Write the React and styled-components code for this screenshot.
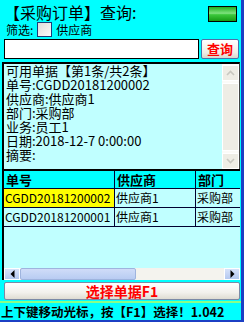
import styled, { createGlobalStyle } from 'styled-components'

const GlobalStyle = createGlobalStyle`
  html, body {
    margin: 0;
    padding: 0;
    background: #00ffff;
  }
  * { box-sizing: border-box; }
`;

const Screen = styled.div`
  width: 244px;
  height: 322px;
  background: #00ffff;
  border-right: 3px solid #1c3fc4;
  border-bottom: 2px solid #1c3fc4;
  display: flex;
  flex-direction: column;
  font-family: "Noto Sans CJK SC", sans-serif;
  color: #000;
  overflow: hidden;
`;

const TitleRow = styled.div`
  height: 21px;
  display: flex;
  align-items: center;
  justify-content: space-between;
  padding: 0 4px 0 4px;
`;

const Title = styled.div`
  font-size: 16px;
  line-height: 16px;
  padding-top: 2px;
`;

const Signal = styled.div`
  width: 29px;
  height: 16px;
  margin-top: 7px;
  border: 1px solid #000;
  background: linear-gradient(#1eb01e, #7ee27e 45%, #3cc83c 55%, #169a16);
`;

const FilterRow = styled.div`
  height: 17px;
  display: flex;
  align-items: center;
  gap: 4px;
  padding-left: 6px;
  font-size: 12px;
  line-height: 14px;
`;

const Check = styled.span`
  width: 15px;
  height: 15px;
  border: 1px solid #1c3c78;
  background: linear-gradient(135deg, #dcdcd8, #fbfbfa);
`;

const SearchRow = styled.div`
  display: flex;
  gap: 2px;
  padding: 1px 0 0 4px;
  height: 22px;
`;

const SearchInput = styled.div`
  width: 195px;
  height: 20px;
  background: #fff;
  border: 1px solid #000;
`;

const SearchButton = styled.button`
  width: 38px;
  height: 20px;
  padding: 0;
  border: 1px solid #4f6fa8;
  border-radius: 2px;
  background: linear-gradient(#ffffff, #f0eee6 70%, #d8d6cc);
  color: #ff0000;
  font-family: inherit;
  font-weight: bold;
  font-size: 13px;
  line-height: 18px;
`;

const InfoBox = styled.div`
  margin: 2px 1px 0 2px;
  height: 107px;
  display: flex;
  background: #c0ffff;
  border-top: 2px solid #000;
  border-left: 2px solid #000;
  border-right: 1px solid #444;
`;

const InfoText = styled.div`
  flex: 1;
  padding: 0 0 0 2px;
  font-size: 13px;
  line-height: 14px;
  white-space: nowrap;
`;

const VScroll = styled.div`
  width: 17px;
  display: flex;
  flex-direction: column;
  background: #fbfbf8;
  padding: 1px 0 0 0;
`;

const VButton = styled.div`
  height: 16px;
  background: #eeede5;
  border: 1px solid #fff;
  display: flex;
  align-items: center;
  justify-content: center;
`;

const VThumb = styled.div`
  flex: 1;
  margin: 2px 0;
  background: #eeede5;
  border: 1px solid #fff;
`;

const GridBox = styled.div`
  margin: 0 1px 0 2px;
  height: 111px;
  display: flex;
  flex-direction: column;
  background: #c0ffff;
  border-left: 2px solid #000;
`;

const Table = styled.div`
  display: grid;
  grid-template-columns: 111px 81px 47px;
  border-top: 2px solid #000;
  overflow: hidden;
`;

const Cell = styled.div`
  height: ${p => (p.$head ? '18px' : '19px')};
  line-height: ${p => (p.$head ? '17px' : '18px')};
  padding-left: ${p => (p.$head ? '2px' : '1px')};
  white-space: nowrap;
  overflow: hidden;
  background: ${p => (p.$head ? '#00ffff' : p.$hl ? '#ffff00' : 'transparent')};
  font-weight: ${p => (p.$head ? 'bold' : 'normal')};
  font-size: ${p => (p.$head ? '13px' : '12px')};
  border-right: 1px solid #000030;
  border-bottom: 1px solid #000030;
`;

const Filler = styled.div`
  flex: 1;
`;

const HScroll = styled.div`
  height: 12px;
  display: flex;
  background: #f4f3ee;
`;

const HArrow = styled.div`
  width: 16px;
  background: linear-gradient(#d6e2fa, #b4c8f0);
  border: 1px solid #fff;
  display: flex;
  align-items: center;
  justify-content: center;
`;

const HThumb = styled.div`
  width: 116px;
  background: linear-gradient(#d0dcf8, #b8ccf2);
  border: 1px solid #9fb4de;
  border-radius: 2px;
`;

const BigButton = styled.button`
  margin: 2px 1px 0 4px;
  height: 18px;
  padding: 0;
  border: 1px solid #7b8aa6;
  border-radius: 2px;
  background: linear-gradient(#ffffff, #f2f1ec 60%, #dedcd2);
  color: #ff0000;
  font-family: inherit;
  font-weight: bold;
  font-size: 14px;
  line-height: 16px;
`;

const StatusBar = styled.div`
  margin-top: 1px;
  flex: 1;
  border-top: 2px solid #88ff88;
  padding-left: 1px;
  font-size: 12.5px;
  font-weight: bold;
  line-height: 17px;
  white-space: nowrap;
`;

const Arrow = ({ dir }) => (
  <svg width="9" height="6" viewBox="0 0 9 6">
    <path
      d={dir === 'up' ? 'M1 5 L4.5 1.5 L8 5' : 'M1 1 L4.5 4.5 L8 1'}
      fill="none"
      stroke="#c8c8c0"
      strokeWidth="1.6"
    />
  </svg>
);

const Tri = ({ dir }) => (
  <svg width="5" height="8" viewBox="0 0 5 8">
    <path d={dir === 'left' ? 'M4.5 0 L0.5 4 L4.5 8 Z' : 'M0.5 0 L4.5 4 L0.5 8 Z'} fill="#000" />
  </svg>
);

const rows = [
  { no: 'CGDD20181200002', sup: '供应商1', dep: '采购部', hl: true },
  { no: 'CGDD20181200001', sup: '供应商1', dep: '采购部' },
];

export default function App() {
  return (
    <>
      <GlobalStyle />
      <Screen>
        <TitleRow>
          <Title>【采购订单】查询:</Title>
          <Signal />
        </TitleRow>
        <FilterRow>
          <span>筛选:</span>
          <Check />
          <span>供应商</span>
        </FilterRow>
        <SearchRow>
          <SearchInput />
          <SearchButton>查询</SearchButton>
        </SearchRow>
        <InfoBox>
          <InfoText>
            <div>可用单据【第1条/共2条】</div>
            <div>单号:CGDD20181200002</div>
            <div>供应商:供应商1</div>
            <div>部门:采购部</div>
            <div>业务:员工1</div>
            <div>日期:2018-12-7 0:00:00</div>
            <div>摘要:</div>
          </InfoText>
          <VScroll>
            <VButton><Arrow dir="up" /></VButton>
            <VThumb />
            <VButton><Arrow dir="down" /></VButton>
          </VScroll>
        </InfoBox>
        <GridBox>
          <Table>
            <Cell $head>单号</Cell>
            <Cell $head>供应商</Cell>
            <Cell $head>部门</Cell>
            {rows.map(r => [
              <Cell key={r.no + 'a'} $hl={r.hl}>{r.no}</Cell>,
              <Cell key={r.no + 'b'}>{r.sup}</Cell>,
              <Cell key={r.no + 'c'}>{r.dep}</Cell>,
            ])}
          </Table>
          <Filler />
          <HScroll>
            <HArrow><Tri dir="left" /></HArrow>
            <HThumb />
            <Filler />
            <HArrow><Tri dir="right" /></HArrow>
          </HScroll>
        </GridBox>
        <BigButton>选择单据F1</BigButton>
        <StatusBar>上下键移动光标，按【F1】选择！1.042</StatusBar>
      </Screen>
    </>
  );
}
